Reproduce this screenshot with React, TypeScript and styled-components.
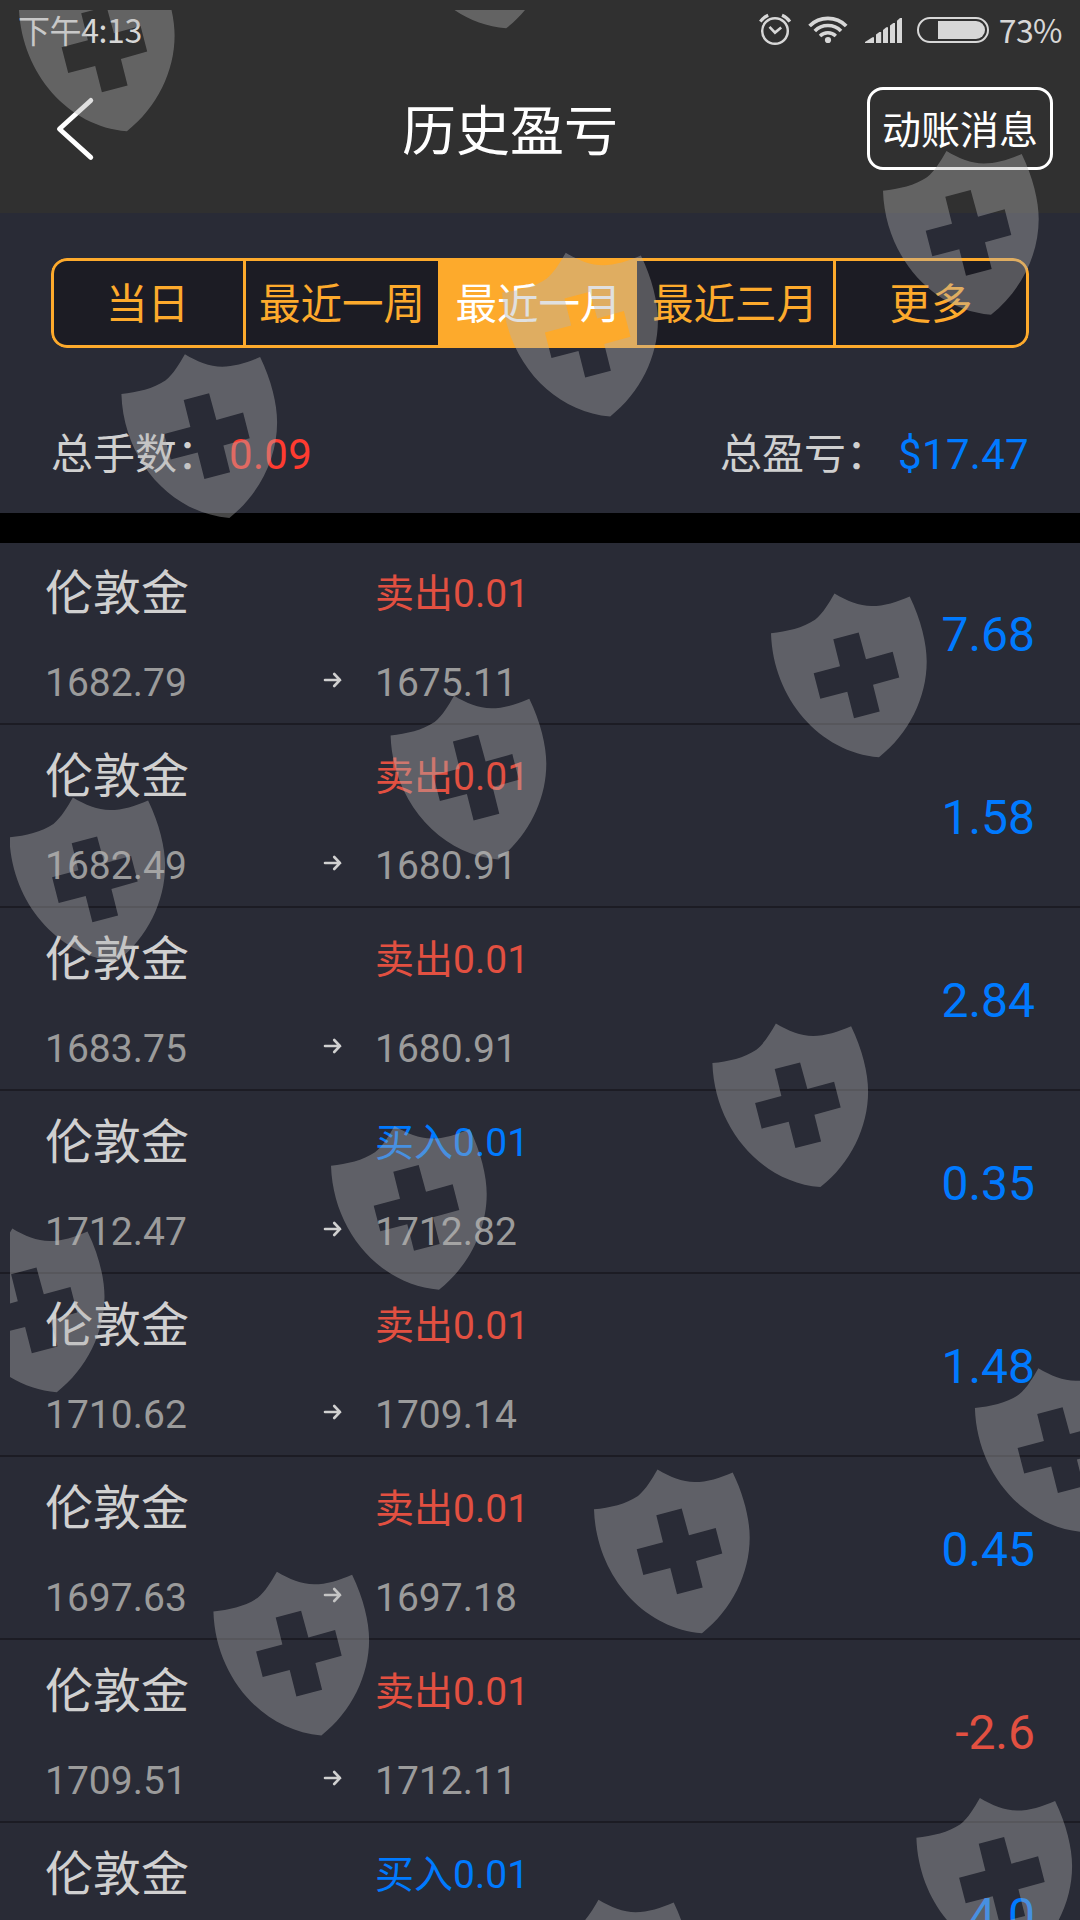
import React, { useState } from 'react'
import styled, { createGlobalStyle } from 'styled-components'

const GlobalStyle = createGlobalStyle`
  html,
  body {
    margin: 0;
    padding: 0;
    background-color: #292b36;
  }
  * {
    box-sizing: border-box;
  }
`

const Screen = styled.div`
  position: relative;
  width: 1080px;
  height: 1920px;
  overflow: hidden;
  background-color: #292b36;
  color: #d0d0d0;
  font-family: Roboto, 'Noto Sans CJK SC', sans-serif;
`

const Header = styled.header`
  height: 213px;
  background-color: #303030;
`

const StatusBar = styled.div`
  height: 60px;
  padding: 0 18px;
  display: flex;
  justify-content: space-between;
  align-items: center;
  color: #d7d7d7;
  font-family: 'Noto Sans CJK SC', sans-serif;
  font-size: 32px;
  line-height: 58px;
`

const StatusClock = styled.span`
  height: 60px;
  letter-spacing: -0.4px;
`

const StatusRight = styled.div`
  display: flex;
  height: 60px;
  letter-spacing: -0.6px;
`

const StatusIcons = styled.svg`
  display: block;
  width: 232px;
  height: 60px;
  margin-right: 8px;
`

const NavBar = styled.div`
  display: flex;
  padding: 27px 27px 0 0;
`

const BackButton = styled.button`
  width: 153px;
  height: 83px;
  padding: 0 0 0 54px;
  border: none;
  background: none;
  svg {
    display: block;
  }
`

const Title = styled.h1`
  flex: 1;
  margin: 0;
  padding-top: 4px;
  color: white;
  font-size: 54px;
  font-weight: 400;
  line-height: 83px;
  text-align: center;
`

const MessageButton = styled.button`
  width: 186px;
  height: 83px;
  padding: 6px 0 0;
  border: 3px solid white;
  border-radius: 16px;
  background: none;
  color: white;
  font-family: inherit;
  font-size: 39px;
  line-height: 71px;
  white-space: nowrap;
`

const FilterPanel = styled.section`
  height: 300px;
  padding: 45px 51px 0;
`

const TabGroup = styled.div`
  display: grid;
  grid-template-columns: 195px 192px 199px 196px 196px;
  height: 90px;
  border-radius: 16px;
  overflow: hidden;
`

const Tab = styled.button<{ $active: boolean }>`
  padding: 4px 0 0;
  border: 0 solid #fdaa2c;
  border-width: 3px 0;
  background-color: ${p => (p.$active ? '#fdaa2c' : '#1c1c24')};
  color: ${p => (p.$active ? '#ffffff' : '#fdaa2c')};
  font-family: inherit;
  font-size: 41.5px;
  line-height: 80px;
  text-indent: ${p => (p.$active ? '2px' : '0')};
  white-space: nowrap;
  &:first-child {
    padding-right: 2px;
    border-width: 3px;
    border-radius: 16px 0 0 16px;
  }
  &:last-child {
    border-width: 3px;
    border-radius: 0 16px 16px 0;
  }
`

const Summary = styled.div`
  display: flex;
  justify-content: space-between;
  margin-top: 76px;
  font-size: 42px;
  line-height: 62px;
`

const SummaryItem = styled.div`
  display: flex;
`

const SummaryLabel = styled.span`
  width: 178px;
`

const SummaryValue = styled.span<{ $color: string }>`
  color: ${p => p.$color};
  letter-spacing: 0.3px;
`

const Band = styled.div`
  height: 30px;
  background-color: #000;
`

const List = styled.ul`
  margin: -1px 0 0;
  padding: 0;
  list-style: none;
`

const Row = styled.li`
  display: grid;
  grid-template-columns: 270px 60px 1fr auto;
  grid-template-rows: 88px 86px;
  height: 183px;
  padding: 7px 45px 0;
  border-bottom: 2px solid #1c1c24;
  line-height: 90px;
`

const Name = styled.span`
  grid-column: 1 / 3;
  font-size: 48px;
`

const Side = styled.span<{ $buy: boolean }>`
  grid-column: 3;
  color: ${p => (p.$buy ? '#007aff' : '#e25041')};
  font-size: 39px;
`

const Price = styled.span`
  padding-top: 1px;
  color: #9b9b9b;
  font-size: 39px;
`

const ArrowCell = styled.span`
  padding: 35px 0 0 7px;
  svg {
    display: block;
  }
`

const Profit = styled.span<{ $loss: boolean }>`
  grid-column: 4;
  grid-row: 1 / 3;
  color: ${p => (p.$loss ? '#e25041' : '#007aff')};
  font-size: 48px;
  line-height: 172px;
`

// shields float above everything, they start 10px in from the top left corner
const Overlay = styled.svg`
  position: absolute;
  left: 10px;
  top: 10px;
  pointer-events: none;
`

const SHIELD =
  'M0 39.7C16 38 32 34.5 44 26.3C52 20 58 9.5 63.5 0C76 7.5 88 12.5 100.7 12.5C113 12.5 126 8.5 138.7 2.9C150 26 155.7 50 155.7 68C155.7 104 138 140 108 163.7C49 159 2 105 0 39.7Z' +
  'M62.3 45.7L69 72.7L42.7 79.7L49.3 105.3L76.3 98.3L83 124.7L108.7 118L102 91.3L128.3 84L121.7 58.3L95 65.7L87.7 39Z'

const shields = [
  [18.9, -32.4],
  [398.2, -135.4],
  [883, 151],
  [502.2, 252.7],
  [121.4, 354.2],
  [771, 593.5],
  [390.6, 695.8],
  [9.4, 797.6],
  [712.4, 1023.4],
  [331, 1126],
  [-51.2, 1228.6],
  [974.9, 1368.3],
  [594, 1469.6],
  [213.4, 1571.8],
  [916.4, 1798],
  [535, 1899.7],
]

const tabs = ['当日', '最近一周', '最近一月', '最近三月', '更多']

const orders = [
  { side: '卖出', open: '1682.79', close: '1675.11', profit: '7.68' },
  { side: '卖出', open: '1682.49', close: '1680.91', profit: '1.58' },
  { side: '卖出', open: '1683.75', close: '1680.91', profit: '2.84' },
  { side: '买入', open: '1712.47', close: '1712.82', profit: '0.35' },
  { side: '卖出', open: '1710.62', close: '1709.14', profit: '1.48' },
  { side: '卖出', open: '1697.63', close: '1697.18', profit: '0.45' },
  { side: '卖出', open: '1709.51', close: '1712.11', profit: '-2.6' },
  { side: '买入', open: '', close: '', profit: '4.0' },
]

const Arrow = () => (
  <svg width="20" height="16" viewBox="0 0 20 16" fill="none">
    <path
      d="M3 8H18M12.2 2L18 8L12.2 14"
      stroke="#d0d0d0"
      strokeWidth="2.6"
      strokeLinecap="round"
    />
  </svg>
)

const StatusSymbols = () => (
  <StatusIcons viewBox="759 0 232 60" fill="none" stroke="#d7d7d7">
    {/* alarm */}
    <circle cx="775" cy="31" r="12.8" strokeWidth="2.5" />
    <path d="M769.5 26.8L775 32.6L781.2 27.4" strokeWidth="2.6" />
    <path d="M760.4 21.6Q763 17.4 768.2 15.2" strokeWidth="3.2" />
    <path d="M789.8 21.6Q787.2 17.4 782 15.2" strokeWidth="3.2" />
    {/* wifi */}
    <path d="M809.6 26A26 26 0 0 1 846.2 26" strokeWidth="3.8" />
    <path d="M814.8 31A18.5 18.5 0 0 1 841 31" strokeWidth="3.6" />
    <path d="M820 36A11.2 11.2 0 0 1 835.8 36" strokeWidth="3.4" />
    <circle cx="828" cy="40" r="3.1" fill="#d7d7d7" stroke="none" />
    {/* signal */}
    <g fill="#d7d7d7" stroke="none">
      <path d="M865 43V42L872.5 37.3H874V43Z" />
      <path d="M876 43V34.6L879.4 32H881.2V43Z" />
      <path d="M883 43V30L886.3 27.2H888V43Z" />
      <path d="M890 43V25.6L893.3 23H895V43Z" />
      <path d="M897 43V20.8L900 18H902V43Z" />
    </g>
    {/* battery */}
    <rect x="918" y="18" width="70" height="24" rx="12" strokeWidth="2" />
    <path
      d="M938 21H976A9 9 0 0 1 976 39H938Z"
      fill="#d7d7d7"
      stroke="none"
    />
  </StatusIcons>
)

export default function App() {
  const [activeTab, setActiveTab] = useState(2)

  return (
    <Screen>
      <GlobalStyle />
      <Header>
        <StatusBar>
          <StatusClock>下午4:13</StatusClock>
          <StatusRight>
            <StatusSymbols />
            <span>73%</span>
          </StatusRight>
        </StatusBar>
        <NavBar>
          <BackButton>
            <svg width="42" height="66" viewBox="0 0 42 66" fill="none">
              <path
                d="M36.8 4.4L5.4 33L36.8 61.4"
                stroke="white"
                strokeWidth="4.8"
                strokeLinecap="round"
                strokeLinejoin="round"
              />
            </svg>
          </BackButton>
          <Title>历史盈亏</Title>
          <MessageButton>动账消息</MessageButton>
        </NavBar>
      </Header>
      <FilterPanel>
        <TabGroup>
          {tabs.map((tab, i) => (
            <Tab
              key={tab}
              $active={i === activeTab}
              onClick={() => setActiveTab(i)}
            >
              {tab}
            </Tab>
          ))}
        </TabGroup>
        <Summary>
          <SummaryItem>
            <SummaryLabel>总手数：</SummaryLabel>
            <SummaryValue $color="#ff3b30">0.09</SummaryValue>
          </SummaryItem>
          <SummaryItem>
            <SummaryLabel>总盈亏：</SummaryLabel>
            <SummaryValue $color="#007aff">$17.47</SummaryValue>
          </SummaryItem>
        </Summary>
      </FilterPanel>
      <Band />
      <List>
        {orders.map((order, i) => (
          <Row key={i}>
            <Name>伦敦金</Name>
            <Side $buy={order.side === '买入'}>{order.side}0.01</Side>
            <Price>{order.open}</Price>
            <ArrowCell>
              <Arrow />
            </ArrowCell>
            <Price>{order.close}</Price>
            <Profit $loss={order.profit.startsWith('-')}>
              {order.profit}
            </Profit>
          </Row>
        ))}
      </List>
      <Overlay width="1070" height="1910" viewBox="10 10 1070 1910">
        {shields.map(([x, y]) => (
          <path
            key={`${x},${y}`}
            d={SHIELD}
            transform={`translate(${x} ${y})`}
            fill="#b2b2b2"
            fillOpacity="0.4"
            fillRule="evenodd"
          />
        ))}
      </Overlay>
    </Screen>
  )
}
